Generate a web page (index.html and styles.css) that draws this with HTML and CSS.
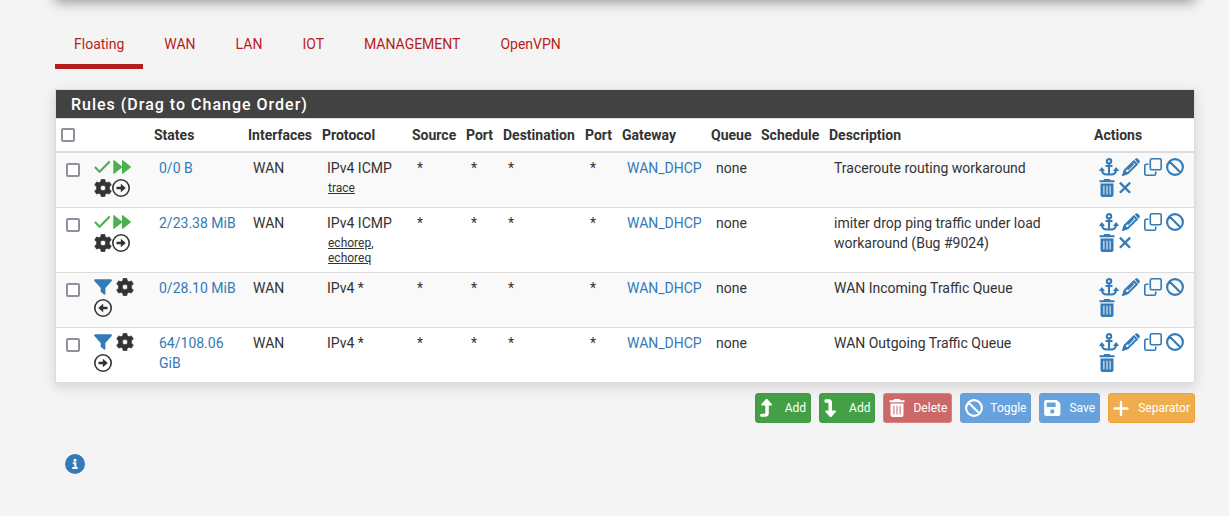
FILE: index.html
```html
<!DOCTYPE html>
<html lang="en">
<head>
<meta charset="utf-8">
<title>Firewall: Rules: Floating</title>
<link rel="stylesheet" href="styles.css">
</head>
<body>
<svg class="sprite" aria-hidden="true">
  <symbol id="check" viewBox="0 0 18 18"><path d="M.9 9 5.600 13.700 15.700 3.400" fill="none" stroke="currentColor" stroke-width="2.100"/></symbol>
  <symbol id="forward" viewBox="0 0 18 18"><path d="M.3 3q0-1.400 1.200-.6L9 8.600V3q0-1.400 1.200-.6l7.500 6.100q.4.5 0 1l-7.500 6.100Q9 16.400 9 15V9.400L1.500 15.600Q.3 16.400.3 15Z" fill="currentColor"/></symbol>
  <symbol id="cog" viewBox="0 0 18 18"><path fill="currentColor" fill-rule="evenodd" d="M7.300.2h3.400l.6 2.600 1.600.9 2.500-.8 1.900 3.200-1.900 1.700v2.400l1.900 1.700-1.900 3.200-2.500-.8-1.600.9-.6 2.600H7.300l-.6-2.600-1.600-.9-2.500.8L.7 11.900l1.900-1.700V7.800L.7 6.100l1.900-3.200 2.500.8 1.600-.9ZM9 6.300a2.700 2.700 0 1 0 0 5.400 2.700 2.700 0 0 0 0-5.400Z" stroke="currentColor" stroke-width=".7" stroke-linejoin="round"/></symbol>
  <symbol id="right" viewBox="0 0 18 18"><circle cx="9" cy="9" r="8.200" fill="none" stroke="currentColor" stroke-width="1.600"/><path fill="currentColor" d="M4.500 7.800H8.800V4.700L13.800 9l-5 4.300v-3.100H4.500Z"/></symbol>
  <symbol id="left" viewBox="0 0 18 18"><circle cx="9" cy="9" r="8.200" fill="none" stroke="currentColor" stroke-width="1.600"/><path fill="currentColor" d="M13.500 7.800H9.200V4.700L4.200 9l5 4.300v-3.100h4.300Z"/></symbol>
  <symbol id="filter" viewBox="0 0 18 18"><path fill="currentColor" d="M1 1.200h16q1.400.5.700 1.800L11.400 10v6q-.3 1-1.200.5L7.400 14.400q-.7-.5-.7-1.200V10L.4 3Q-.3 1.700 1 1.200Z"/></symbol>
  <symbol id="anchor" viewBox="0 0 20 18"><g fill="none" stroke="currentColor" stroke-width="2.100"><circle cx="10" cy="3.300" r="2.200"/><path d="M10 5.500V16.500M6.500 8h7M2.900 11.500Q3 16.500 8 16.500h4q5 0 5.100-5"/></g><path fill="currentColor" d="M0 12.700 2.900 9l3 3.700-.5.400H.5ZM14.100 12.700l3-3.700 2.900 3.700-.5.400h-4.900Z"/></symbol>
  <symbol id="pencil" viewBox="0 0 18 18"><path fill="currentColor" d="M12.600 1.300 14 .4q1-.5 1.900.3l1.500 1.500q.8.900.2 2l-1.200 1.500Z"/><path fill="none" stroke="currentColor" stroke-width="2" d="m11.800 3.300 3 3L5.800 15.200l-4.300 1.300 1.300-4.300Z"/><path stroke="currentColor" stroke-width="1.800" d="m11.500 5.500-6 6"/><path fill="currentColor" d="m2.200 11.500 4.300 4.300L.6 17.900q-.7 0-.5-.6Z"/></symbol>
  <symbol id="clone" viewBox="0 0 18 18"><g fill="none" stroke="currentColor" stroke-width="1.600"><rect x="6.300" y=".8" width="10.900" height="10.900" rx="1.500"/><path d="M4.500 6.300H2.300Q.8 6.300.8 7.800v7.900q0 1.500 1.500 1.500h7.900q1.500 0 1.500-1.500v-2.200"/></g></symbol>
  <symbol id="ban" viewBox="0 0 18 18"><path fill="none" stroke="currentColor" stroke-width="2.100" d="M9 1.100a7.900 7.900 0 1 0 0 15.800A7.900 7.900 0 1 0 9 1.100M3.500 3.500l11 11"/></symbol>
  <symbol id="trash" viewBox="0 0 16 18"><path fill="currentColor" fill-rule="evenodd" d="M5.200 0h5.600l.7 1.200H15.500V3.300H.5V1.200h4ZM1.500 4.500h13V16q0 2-2 2h-9q-2 0-2-2ZM4.400 6.800v8.700h1V6.800ZM7.500 6.800v8.700h1V6.800ZM10.600 6.800v8.700h1V6.800Z"/></symbol>
  <symbol id="times" viewBox="0 0 12 18"><path stroke="currentColor" stroke-width="2.300" d="m.9 3.600 10.200 10.200m0-10.200L.9 13.800"/></symbol>
  <symbol id="up" viewBox="0 0 18 18"><path fill="currentColor" d="M6 .1q.7-.4 1.400.2l4.400 4.800q.7 1.500-.7 1.500H8.800V14q0 3.800-3.600 3.800H1.500q-1.500 0-1.500-1.500t1.500-1.500h2.800q1 0 1-1V6.600H2.200Q.8 6.300 1.500 5Z"/></symbol>
  <symbol id="down" viewBox="0 0 18 18"><path fill="currentColor" d="M7.300 17.900q-.7.400-1.400-.2L1.500 12.900q-.7-1.500.7-1.500H4.500V4.800q0-1-1-1H1.800Q.3 3.800.3 2.100T1.800.3h3.500q2.700 0 2.700 3.700v7.400h3.100q1.400.3.700 1.600Z"/></symbol>
  <symbol id="save" viewBox="0 0 18 18"><path fill="currentColor" fill-rule="evenodd" d="M2 1h10q1 0 1.700.7l2 2Q16.400 4.400 16.400 5.400V15q0 2-2 2H2.200q-2 0-2-2V3Q.2 1 2 1Zm.6 3.300v2.800q0 .9.900.9h7.300q.9 0 .9-.9V4.300q0-.9-.9-.9H3.500q-.9 0-.9.900ZM8.300 10.200a2.200 2.200 0 1 0 0 4.400 2.200 2.200 0 0 0 0-4.400Z"/></symbol>
  <symbol id="plus" viewBox="0 0 18 18"><path stroke="currentColor" stroke-width="2.400" stroke-linecap="round" d="M8 3v13M1.500 9.500h13"/></symbol>
  <symbol id="info" viewBox="0 0 20 20"><circle cx="10" cy="10" r="10" fill="currentColor"/><circle cx="10" cy="6.200" r="1.500" fill="#fff"/><path stroke="#fff" stroke-width="2" fill="none" d="M7.800 9.300h2.600v5M7.300 14h5.400"/></symbol>
</svg>
<div class="topbar"></div>
<main class="page">
  <nav class="tabs">
    <a class="tab active" href="#floating">Floating</a>
    <a class="tab" href="#wan">WAN</a>
    <a class="tab" href="#lan">LAN</a>
    <a class="tab" href="#iot">IOT</a>
    <a class="tab" href="#management">MANAGEMENT</a>
    <a class="tab" href="#openvpn">OpenVPN</a>
  </nav>
  <section class="panel">
    <h2 class="panel-title">Rules (Drag to Change Order)</h2>
    <table class="rules">
      <colgroup><col class="c-check"><col class="c-icons"><col class="c-states"><col class="c-interfaces"><col class="c-protocol"><col class="c-source"><col class="c-port"><col class="c-destination"><col class="c-port"><col class="c-gateway"><col class="c-queue"><col class="c-schedule"><col><col class="c-actions"></colgroup>
      <thead>
        <tr><th><input type="checkbox" aria-label="Select all rules"></th><th></th><th>States</th><th>Interfaces</th><th>Protocol</th><th>Source</th><th>Port</th><th>Destination</th><th>Port</th><th>Gateway</th><th>Queue</th><th>Schedule</th><th>Description</th><th>Actions</th></tr>
      </thead>
      <tbody>
        <tr>
          <td><input type="checkbox" aria-label="Select Traceroute routing workaround"></td>
          <td><div class="icons close"><svg class="ico pass"><use href="#check"/></svg><svg class="ico pass"><use href="#forward"/></svg></div><div class="icons tight"><svg class="ico"><use href="#cog"/></svg><svg class="ico"><use href="#right"/></svg></div></td>
          <td><a href="#states">0/0 B</a></td><td>WAN</td><td>IPv4 ICMP<div class="types"><u>trace</u></div></td><td>*</td><td>*</td><td>*</td><td>*</td><td><a href="#gateway">WAN_DHCP</a></td><td>none</td><td></td><td>Traceroute routing workaround</td>
          <td><div class="icons"><a href="#anchor" aria-label="Move"><svg class="ico wide"><use href="#anchor"/></svg></a><a href="#edit" aria-label="Edit"><svg class="ico"><use href="#pencil"/></svg></a><a href="#copy" aria-label="Copy"><svg class="ico"><use href="#clone"/></svg></a><a href="#disable" aria-label="Disable"><svg class="ico"><use href="#ban"/></svg></a></div><div class="icons"><a href="#delete" aria-label="Delete"><svg class="ico narrow"><use href="#trash"/></svg></a><a href="#kill" aria-label="Kill states"><svg class="ico slim"><use href="#times"/></svg></a></div></td>
        </tr>
        <tr>
          <td><input type="checkbox" aria-label="Select ping traffic workaround"></td>
          <td><div class="icons close"><svg class="ico pass"><use href="#check"/></svg><svg class="ico pass"><use href="#forward"/></svg></div><div class="icons tight"><svg class="ico"><use href="#cog"/></svg><svg class="ico"><use href="#right"/></svg></div></td>
          <td><a href="#states">2/23.38 MiB</a></td><td>WAN</td><td>IPv4 ICMP<div class="types"><u>echorep</u>, <u>echoreq</u></div></td><td>*</td><td>*</td><td>*</td><td>*</td><td><a href="#gateway">WAN_DHCP</a></td><td>none</td><td></td><td>imiter drop ping traffic under load workaround (Bug #9024)</td>
          <td><div class="icons"><a href="#anchor" aria-label="Move"><svg class="ico wide"><use href="#anchor"/></svg></a><a href="#edit" aria-label="Edit"><svg class="ico"><use href="#pencil"/></svg></a><a href="#copy" aria-label="Copy"><svg class="ico"><use href="#clone"/></svg></a><a href="#disable" aria-label="Disable"><svg class="ico"><use href="#ban"/></svg></a></div><div class="icons"><a href="#delete" aria-label="Delete"><svg class="ico narrow"><use href="#trash"/></svg></a><a href="#kill" aria-label="Kill states"><svg class="ico slim"><use href="#times"/></svg></a></div></td>
        </tr>
        <tr>
          <td><input type="checkbox" aria-label="Select WAN Incoming Traffic Queue"></td>
          <td><div class="icons"><svg class="ico match"><use href="#filter"/></svg><svg class="ico"><use href="#cog"/></svg></div><div class="icons"><svg class="ico"><use href="#left"/></svg></div></td>
          <td><a href="#states">0/28.10 MiB</a></td><td>WAN</td><td>IPv4 *</td><td>*</td><td>*</td><td>*</td><td>*</td><td><a href="#gateway">WAN_DHCP</a></td><td>none</td><td></td><td>WAN Incoming Traffic Queue</td>
          <td><div class="icons"><a href="#anchor" aria-label="Move"><svg class="ico wide"><use href="#anchor"/></svg></a><a href="#edit" aria-label="Edit"><svg class="ico"><use href="#pencil"/></svg></a><a href="#copy" aria-label="Copy"><svg class="ico"><use href="#clone"/></svg></a><a href="#disable" aria-label="Disable"><svg class="ico"><use href="#ban"/></svg></a></div><div class="icons"><a href="#delete" aria-label="Delete"><svg class="ico narrow"><use href="#trash"/></svg></a></div></td>
        </tr>
        <tr>
          <td><input type="checkbox" aria-label="Select WAN Outgoing Traffic Queue"></td>
          <td><div class="icons"><svg class="ico match"><use href="#filter"/></svg><svg class="ico"><use href="#cog"/></svg></div><div class="icons"><svg class="ico"><use href="#right"/></svg></div></td>
          <td><a href="#states">64/108.06 GiB</a></td><td>WAN</td><td>IPv4 *</td><td>*</td><td>*</td><td>*</td><td>*</td><td><a href="#gateway">WAN_DHCP</a></td><td>none</td><td></td><td>WAN Outgoing Traffic Queue</td>
          <td><div class="icons"><a href="#anchor" aria-label="Move"><svg class="ico wide"><use href="#anchor"/></svg></a><a href="#edit" aria-label="Edit"><svg class="ico"><use href="#pencil"/></svg></a><a href="#copy" aria-label="Copy"><svg class="ico"><use href="#clone"/></svg></a><a href="#disable" aria-label="Disable"><svg class="ico"><use href="#ban"/></svg></a></div><div class="icons"><a href="#delete" aria-label="Delete"><svg class="ico narrow"><use href="#trash"/></svg></a></div></td>
        </tr>
      </tbody>
    </table>
  </section>
  <div class="buttons">
    <button class="btn success" type="button"><svg class="ico"><use href="#up"/></svg>Add</button>
    <button class="btn success" type="button"><svg class="ico"><use href="#down"/></svg>Add</button>
    <button class="btn danger" type="button"><svg class="ico"><use href="#trash"/></svg>Delete</button>
    <button class="btn primary" type="button"><svg class="ico"><use href="#ban"/></svg>Toggle</button>
    <button class="btn primary" type="button"><svg class="ico"><use href="#save"/></svg>Save</button>
    <button class="btn warning" type="button"><svg class="ico"><use href="#plus"/></svg>Separator</button>
  </div>
  <button class="info" type="button" aria-label="Information"><svg><use href="#info"/></svg></button>
</main>
</body>
</html>
```
FILE: styles.css
```css
* { box-sizing: border-box; }
body {
  margin: 0;
  background: #f4f4f4;
  color: #333;
  font: 14px/20px Roboto, "Liberation Sans", sans-serif;
}
a { color: #337ab7; text-decoration: none; }
svg { display: block; }
.sprite { display: none; }
.topbar {
  height: 40px;
  margin: -40px 34px 0 55px;
  background: #fff;
  box-shadow: 0 2px 12px rgba(0, 0, 0, .4);
}
.page { padding: 20px 34px 40px 55px; }

.tabs { display: flex; gap: 2px; margin-bottom: 20px; }
.tab {
  padding: 14px 19px 10px;
  border-bottom: 5px solid transparent;
  color: #b71c1c;
}
.tab.active { border-bottom-color: #b71c1c; }

.panel {
  background: #fff;
  border: 1px solid #ddd;
  box-shadow: 0 4px 12px rgba(0, 0, 0, .14);
}
.panel-title {
  margin: 0;
  padding: 5px 15px 3px;
  border-bottom: 1px solid #ddd;
  background: #424242;
  color: #fff;
  font-size: 16px;
  font-weight: 500;
  letter-spacing: 1px;
}
.rules { width: 100%; table-layout: fixed; border-collapse: separate; border-spacing: 0; }
.c-check { width: 28px; }
.c-icons { width: 65px; }
.c-states { width: 94px; }
.c-interfaces { width: 74px; }
.c-protocol { width: 90px; }
.c-source { width: 54px; }
.c-port { width: 37px; }
.c-destination { width: 82px; }
.c-gateway { width: 89px; }
.c-queue { width: 50px; }
.c-schedule { width: 68px; }
.c-actions { width: 105px; }
th {
  height: 34px;
  padding: 5px 0 5px 5px;
  border-bottom: 2px solid #ddd;
  text-align: left;
  white-space: nowrap;
}
td { height: 55px; padding: 5px 0 5px 10px; vertical-align: top; }
tr + tr td { border-top: 1px solid #ddd; }
tbody tr:first-child td { height: 54px; }
tbody tr:nth-child(odd) { background: #f9f9f9; }
td:last-child, td:nth-child(13) { padding-right: 5px; }
input[type="checkbox"] {
  appearance: none;
  display: block;
  width: 14px;
  height: 14px;
  margin: 0;
  border: 2px solid #8f8f9d;
  border-radius: 2px;
  background: #fff;
}
td input[type="checkbox"] { margin-top: 5px; }
.types { margin: 3px 0 1px 1px; font-size: 12px; line-height: 15px; }

.icons { display: flex; gap: 4px; height: 21px; align-items: flex-start; }
.icons.close { gap: 1px; }
.icons.tight { gap: 0; }
.ico { width: 18px; height: 18px; flex: none; }
.ico.wide { width: 20px; }
.icons a:has(.wide) { margin-right: -1px; }
.ico.narrow { width: 16px; }
.ico.slim { width: 12px; }
.pass { color: #4caf50; }
.match { color: #337ab7; }

.buttons { display: flex; justify-content: flex-end; gap: 8px; margin-top: 10px; }
.btn {
  display: flex;
  align-items: center;
  gap: 7px;
  height: 30px;
  padding: 0 4px;
  border: 1px solid;
  border-radius: 3px;
  color: #fff;
  font: 12px/18px Roboto, "Liberation Sans", sans-serif;
}
.success { background: #43a047; border-color: #3f9a43; }
.danger { background: #cd6869; border-color: #de7e80; }
.primary { background: #67a2de; border-color: #6c9fd1; }
.warning { background: #f0ad4e; border-color: #eea236; }
.info {
  display: block;
  margin: 31px 0 0 10px;
  padding: 0;
  border: 0;
  background: none;
  color: #337ab7;
}
.info svg { width: 20px; height: 20px; }
```
